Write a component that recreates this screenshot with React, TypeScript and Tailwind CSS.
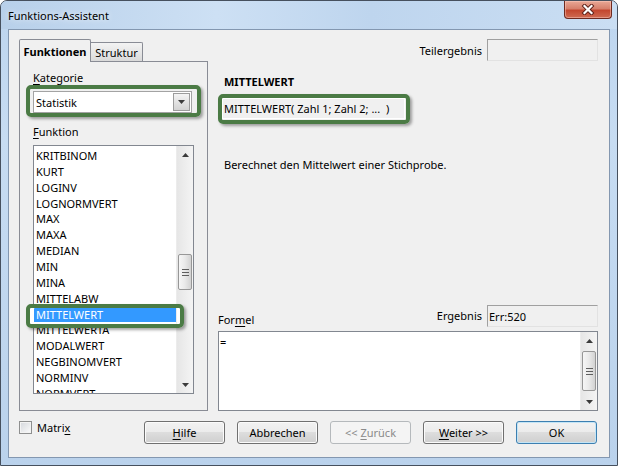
import React from 'react';

const functionNames = [
  'KRITBINOM',
  'KURT',
  'LOGINV',
  'LOGNORMVERT',
  'MAX',
  'MAXA',
  'MEDIAN',
  'MIN',
  'MINA',
  'MITTELABW',
  'MITTELWERT',
  'MITTELWERTA',
  'MODALWERT',
  'NEGBINOMVERT',
  'NORMINV',
  'NORMVERT',
];

const selectedName = 'MITTELWERT';

// mnemonic letter, drawn underlined like a Windows accelerator key
const Key = ({ children }: { children: React.ReactNode }) => (
  <span className="underline underline-offset-[2px] decoration-[1px]">{children}</span>
);

const Arrow = ({ down }: { down?: boolean }) => (
  <svg width="7" height="4" viewBox="0 0 7 4" className="block">
    <polygon points={down ? '0,0 7,0 3.5,4' : '0,4 7,4 3.5,0'} fill="#3b3b3b" />
  </svg>
);

interface ScrollBarProps {
  thumbClass: string;
}

const ScrollBar = ({ thumbClass }: ScrollBarProps) => (
  <div className="w-[17px] h-full flex flex-col shrink-0 bg-[linear-gradient(90deg,#e6e6e6,#f4f4f4)] border-l border-[#ececec]">
    <div className="h-[17px] flex items-center justify-center shrink-0">
      <Arrow />
    </div>
    <div className="flex-1 flex flex-col">
      <div
        className={`mx-[1px] ${thumbClass} rounded-[2px] border border-[#979797] bg-[linear-gradient(90deg,#f6f6f6,#e9e9e9_50%,#d2d2d2)] flex flex-col items-center justify-center gap-[2px]`}
      >
        <div className="w-[7px] h-px bg-[#5e5e5e]" />
        <div className="w-[7px] h-px bg-[#5e5e5e]" />
        <div className="w-[7px] h-px bg-[#5e5e5e]" />
      </div>
    </div>
    <div className="h-[17px] flex items-center justify-center shrink-0">
      <Arrow down />
    </div>
  </div>
);

interface ButtonProps {
  children: React.ReactNode;
  disabled?: boolean;
  isDefault?: boolean;
}

const DialogButton = ({ children, disabled, isDefault }: ButtonProps) => {
  let look =
    'border-[#707070] text-black bg-[linear-gradient(#f2f2f2,#ebebeb_50%,#dddddd_50%,#cfcfcf)] shadow-[inset_0_0_0_1px_#fbfbfb]';
  if (disabled) look = 'border-[#b5b9bc] text-[#8a8a8a] bg-[#f4f4f4]';
  if (isDefault)
    look =
      'border-[#3c7fb1] text-black bg-[linear-gradient(#f2f2f2,#ebebeb_50%,#dddddd_50%,#cfcfcf)] shadow-[inset_0_0_0_1px_#c4e5f6]';
  return (
    <div className={`w-[81px] h-[23px] rounded-[3px] border flex items-center justify-center ${look}`}>
      <span className="whitespace-pre">{children}</span>
    </div>
  );
};

const GreenMark = ({ className }: { className: string }) => (
  <div
    className={`absolute pointer-events-none border-[4px] border-[#4b7b45] rounded-[5px] ${className}`}
  />
);

const App = () => {
  return (
    <div className="w-[618px] h-[466px] flex flex-col rounded-t-[7px] border border-[#46505e] bg-[linear-gradient(180deg,#bdd5ef,#c7dcf2_30%,#bad2ec)] font-['Noto_Sans',sans-serif] text-[11px] leading-[15px] text-black overflow-hidden">
      {/* title bar */}
      <div className="h-[28px] flex items-start shrink-0 bg-[linear-gradient(90deg,#b8d0ea,#cde0f4_35%,#bed5ee_60%,#cadef3)]">
        <span className="pl-[7px] pt-[7px] [text-shadow:0_0_6px_#ffffff]">Funktions-Assistent</span>
        <div className="ml-auto mr-[5px] w-[48px] h-[18px] rounded-b-[4px] border border-t-0 border-[#6e2a20] bg-[linear-gradient(#e9a896,#d6806c_45%,#c3472f_55%,#cf6b52)] shadow-[inset_0_0_0_1px_rgba(255,210,200,0.45)] flex items-center justify-center">
          <svg width="14" height="11" viewBox="0 0 14 11">
            <path d="M3.5 2 L10.5 9 M10.5 2 L3.5 9" stroke="#5a1e16" strokeWidth="4" strokeLinecap="square" />
            <path d="M3.5 2 L10.5 9 M10.5 2 L3.5 9" stroke="#ffffff" strokeWidth="2.2" strokeLinecap="square" />
          </svg>
        </div>
      </div>

      {/* client area */}
      <div className="mx-[7px] h-[429px] shrink-0 border border-[#8397b0] bg-[#f0f0f0] flex flex-col">
        <div className="flex pt-[9px] pl-[10px] pr-[11px] h-[381px] shrink-0">
          {/* left: tab control */}
          <div className="w-[189px] flex flex-col">
            <div className="flex items-end h-[23px] relative z-10">
              <div className="w-[72px] h-[23px] border border-b-0 border-[#898c95] rounded-t-[2px] bg-[#f0f0f0] font-bold flex justify-center pt-[4px]">
                Funktionen
              </div>
              <div className="w-[52px] h-[19px] mb-px border border-l-0 border-b-0 border-[#898c95] rounded-tr-[2px] bg-[linear-gradient(#f3f3f3,#e7e7e7_50%,#dadada)] flex justify-center pt-[2px]">
                Struktur
              </div>
            </div>
            <div className="-mt-px h-[350px] border border-[#898c95] bg-[#f0f0f0] pl-[13px] pt-[8px] flex flex-col">
              <div className="h-[15px]">
                <Key>K</Key>ategorie
              </div>
              <div className="relative mt-[6px] w-[159px] h-[22px] border border-[#a3a3a3] bg-white flex items-center">
                <span className="pl-[2px]">Statistik</span>
                <div className="ml-auto mr-px w-[17px] h-[18px] border border-[#9c9c9c] bg-[linear-gradient(#f4f4f4,#e3e3e3_50%,#d3d3d3)] flex items-center justify-center">
                  <Arrow down />
                </div>
                <GreenMark className="-left-[8px] -top-[7px] -right-[10px] -bottom-[5px] shadow-[2px_2px_3px_rgba(0,0,0,0.35)]" />
              </div>
              <div className="mt-[11px] h-[15px]">
                <Key>F</Key>unktion
              </div>
              <div className="relative mt-[6px] w-[161px] h-[249px] border border-[#828790] bg-white flex">
                <div className="flex-1 overflow-hidden pt-[2px]">
                  {functionNames.map((name) => (
                    <div
                      key={name}
                      className={`h-[15.86px] leading-[15.86px] pl-[2px] whitespace-nowrap ${
                        name === selectedName ? 'bg-[#3399ff] text-white' : ''
                      }`}
                    >
                      {name}
                    </div>
                  ))}
                </div>
                <ScrollBar thumbClass="mt-[91px] h-[36px]" />
                <GreenMark className="-left-[8px] top-[158px] w-[158px] h-[24px] shadow-[2px_2px_3px_rgba(0,0,0,0.35),inset_4px_0_0_#ffffff,inset_-3px_0_0_#ffffff]" />
              </div>
            </div>
          </div>

          {/* right: function details */}
          <div className="ml-[10px] w-[380px] flex flex-col">
            <div className="flex items-center justify-end gap-[5px] h-[22px] shrink-0">
              <span>Teilergebnis</span>
              <div className="w-[111px] h-[22px] border border-[#a0a0a0] border-r-[#e2e2e2] border-b-[#e2e2e2] bg-[#f0f0f0]" />
            </div>
            <div className="mt-[13px] pl-[6px] font-bold h-[15px]">MITTELWERT</div>
            <div className="relative ml-[4px] mt-[9px] w-[183px] h-[21px] border border-white bg-[#f0f0f0] pl-px flex items-center whitespace-pre">
              MITTELWERT( Zahl 1; Zahl 2; ...  )
              <GreenMark className="-left-[5px] -top-[5px] -right-[6px] -bottom-[6px] shadow-[2px_2px_3px_rgba(0,0,0,0.35)]" />
            </div>
            <div className="mt-[38px] pl-[6px] h-[15px]">Berechnet den Mittelwert einer Stichprobe.</div>
            <div className="flex-1" />
            <div className="flex h-[22px] items-center shrink-0">
              <span className="self-end">
                For<Key>m</Key>el
              </span>
              <span className="ml-auto mr-[5px] -mt-[2px]">Ergebnis</span>
              <div className="w-[111px] h-[22px] border border-[#a0a0a0] border-r-[#e2e2e2] border-b-[#e2e2e2] bg-[#f0f0f0] pl-px flex items-center">
                Err:520
              </div>
            </div>
            <div className="mt-[4px] h-[80px] border border-[#828790] bg-white flex shrink-0">
              <div className="flex-1 pl-px pt-[2px]">=</div>
              <ScrollBar thumbClass="mt-[2px] h-[40px]" />
            </div>
          </div>
        </div>

        {/* bottom buttons */}
        <div className="mt-[10px] flex items-start pl-[10px] pr-[12px]">
          <div className="flex items-center gap-[5px] h-[13px]">
            <div className="w-[13px] h-[13px] border border-[#8e8f8f] bg-[linear-gradient(135deg,#d4d7dc,#fbfbfb)] shadow-[inset_0_0_0_1px_#f3f3f3]" />
            <span className="-mt-px">
              Matri<Key>x</Key>
            </span>
          </div>
          <div className="ml-auto flex gap-[12px]">
            <DialogButton>
              <Key>H</Key>ilfe
            </DialogButton>
            <DialogButton>Abbrechen</DialogButton>
            <DialogButton disabled>
              {'<< '}
              <Key>Z</Key>urück
            </DialogButton>
            <DialogButton>
              <Key>W</Key>eiter &gt;&gt;
            </DialogButton>
            <DialogButton isDefault>OK</DialogButton>
          </div>
        </div>
      </div>
    </div>
  );
};

export default App;
